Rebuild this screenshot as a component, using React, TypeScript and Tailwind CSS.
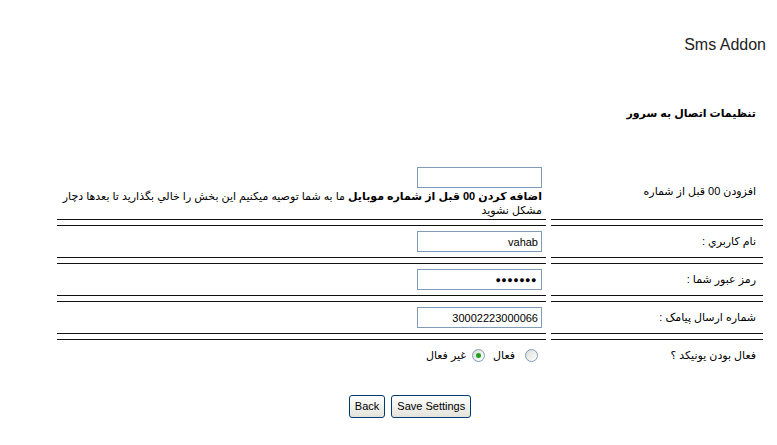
import React from "react";

const font = { fontFamily: '"Liberation Sans", "DejaVu Sans", sans-serif' };

function Sep() {
  return (
    <div className="flex gap-[5px]">
      <div className="w-[212px] h-[7px] border-y border-[#111]" />
      <div className="w-[489px] h-[7px] border-y border-[#111]" />
    </div>
  );
}

function Field({ value, className = "" }: { value: string; className?: string }) {
  return (
    <input
      type="text"
      readOnly
      value={value}
      className={
        "block w-[125px] h-[21px] border border-[#7f9db9] bg-white px-[3px] text-black outline-none " +
        (className || "text-[11px]")
      }
    />
  );
}

function Row({ label, children }: { label: string; children: React.ReactNode }) {
  return (
    <div className="flex gap-[5px] h-[31px]">
      <div className="w-[212px] flex items-center pr-[7px] text-[11px]">{label}</div>
      <div className="w-[489px] flex items-center pr-[4px]">{children}</div>
    </div>
  );
}

function Radio({ checked }: { checked?: boolean }) {
  return (
    <span className="relative inline-flex w-[13px] h-[13px] rounded-full border border-[#7f9db9] bg-gradient-to-br from-[#dcdcd7] to-white items-center justify-center">
      {checked && <span className="w-[5px] h-[5px] rounded-full bg-[#21a121]" />}
    </span>
  );
}

export default function App() {
  return (
    <div className="w-[777px] h-[445px] bg-white text-black" style={font}>
      <div className="pt-[36px] pr-[11px] text-right text-[16px] leading-[18px] text-[#222]">
        Sms Addon
      </div>
      <div dir="rtl" className="ml-[57px] w-[706px]">
        <div className="mt-[52px] pr-[7px] text-[11px] leading-[14px] font-bold">
          تنظیمات اتصال به سرور
        </div>
        <div className="mt-[43px]">
          <div className="flex gap-[5px]">
            <div className="w-[212px] flex items-center pr-[7px] text-[11px]">
              افزودن 00 قبل از شماره
            </div>
            <div className="w-[489px] pt-[4px] pb-[2px] pr-[4px]">
              <Field value="" />
              <p className="mt-[1px] text-[11px] leading-[14px]">
                <b>اضافه کردن 00 قبل از شماره موبایل</b> ما به شما توصیه میکنیم این بخش را خالي
                بگذارید تا بعدها دچار مشکل نشوید
              </p>
            </div>
          </div>
          <Sep />
          <Row label="نام کاربري :">
            <Field value="vahab" />
          </Row>
          <Sep />
          <Row label="رمز عبور شما :">
            <Field value="●●●●●●●" className="text-[9px] tracking-[0.5px] pr-[4px]" />
          </Row>
          <Sep />
          <Row label="شماره ارسال پیامک :">
            <Field value="30002223000066" />
          </Row>
          <Sep />
          <div className="flex gap-[5px] h-[31px]">
            <div className="w-[212px] flex items-center pr-[7px] text-[11px]">
              فعال بودن یونیکد ؟
            </div>
            <div className="w-[489px] flex items-center pr-[8px] text-[11px]">
              <Radio />
              <span className="mr-[10px]">فعال</span>
              <span className="mr-[8px] flex">
                <Radio checked />
              </span>
              <span className="mr-[6px]">غیر فعال</span>
            </div>
          </div>
        </div>
        <div dir="ltr" className="mt-[24px] flex justify-center gap-[6px]">
          <button className="h-[23px] px-[5px] rounded-[3px] border border-[#003c74] bg-gradient-to-b from-white to-[#e3e3db] text-[11px] text-black">
            Back
          </button>
          <button className="h-[23px] px-[5px] rounded-[3px] border border-[#003c74] bg-gradient-to-b from-white to-[#e3e3db] text-[11px] text-black">
            Save Settings
          </button>
        </div>
      </div>
    </div>
  );
}
